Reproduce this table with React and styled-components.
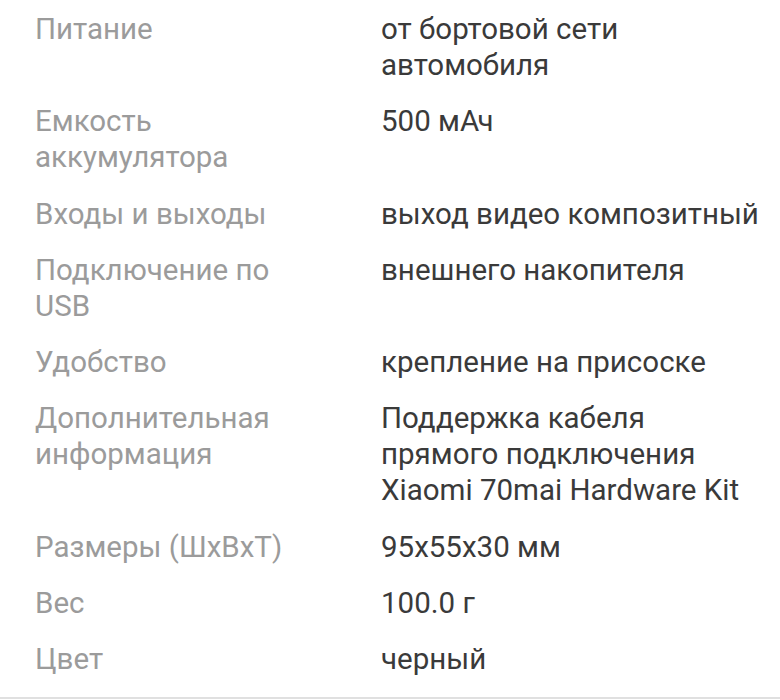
import React from 'react'
import styled, { createGlobalStyle } from 'styled-components'

const GlobalStyle = createGlobalStyle`
  body {
    margin: 0;
    background: #ffffff;
    font-family: Roboto, 'Noto Sans', sans-serif;
  }
`

const Page = styled.div`
  width: 780px;
  height: 699px;
  box-sizing: border-box;
  overflow: hidden;
  border-bottom: 2px solid #e0e0e0;
  padding: 11px 0 0 35px;
`

const Table = styled.dl`
  margin: 0;
  display: grid;
  grid-template-columns: 346px 1fr;
  row-gap: 20.3px;
  font-size: 29.5px;
  line-height: 36px;
`

const Label = styled.dt`
  margin: 0;
  color: #9b9b9b;
  max-width: 270px;
`

const Value = styled.dd`
  margin: 0;
  color: #3a3a3a;
  white-space: nowrap;
`

const specs = [
  ['Питание', ['от бортовой сети', 'автомобиля']],
  ['Емкость аккумулятора', ['500 мАч']],
  ['Входы и выходы', ['выход видео композитный']],
  ['Подключение по USB', ['внешнего накопителя']],
  ['Удобство', ['крепление на присоске']],
  ['Дополнительная информация', ['Поддержка кабеля', 'прямого подключения', 'Xiaomi 70mai Hardware Kit']],
  ['Размеры (ШхВхТ)', ['95x55x30 мм']],
  ['Вес', ['100.0 г']],
  ['Цвет', ['черный']],
]

export default function App() {
  return (
    <>
      <GlobalStyle />
      <Page>
        <Table>
          {specs.map(([label, lines]) => (
            <React.Fragment key={label}>
              <Label>{label}</Label>
              <Value>
                {lines.map((line, i) => (
                  <React.Fragment key={i}>
                    {i > 0 && <br />}
                    {line}
                  </React.Fragment>
                ))}
              </Value>
            </React.Fragment>
          ))}
        </Table>
      </Page>
    </>
  )
}
